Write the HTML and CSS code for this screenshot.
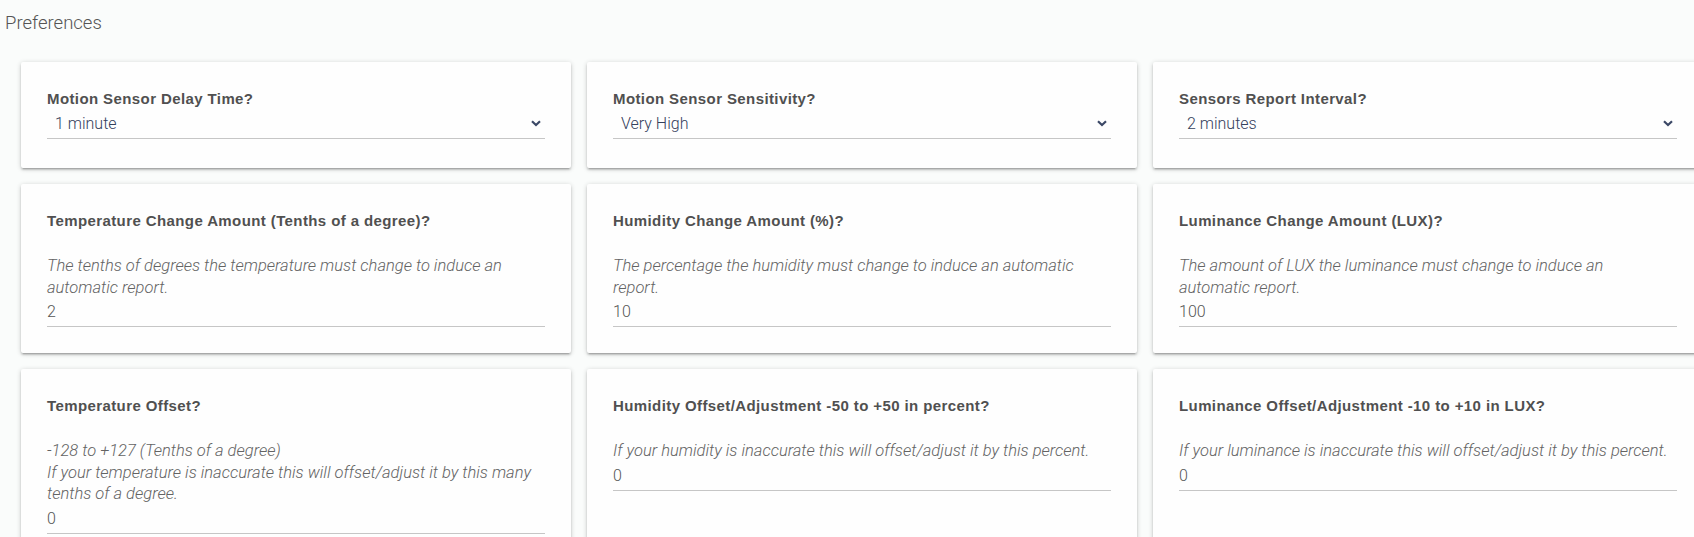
FILE: index.html
```html
<!DOCTYPE html>
<html>
<head>
<meta charset="utf-8">
<link rel="stylesheet" href="styles.css">
</head>
<body>
<div class="page-title">Preferences</div>
<div class="grid">
  <div class="card">
    <div class="label">Motion Sensor Delay Time?</div>
    <div class="select"><span class="select-value">1 minute</span><svg class="chev" width="10" height="7" viewBox="0 0 10 7"><polyline points="1,1.2 5,5 9,1.2" fill="none" stroke="#3b4866" stroke-width="2.2"/></svg></div>
  </div>
  <div class="card">
    <div class="label">Motion Sensor Sensitivity?</div>
    <div class="select"><span class="select-value">Very High</span><svg class="chev" width="10" height="7" viewBox="0 0 10 7"><polyline points="1,1.2 5,5 9,1.2" fill="none" stroke="#3b4866" stroke-width="2.2"/></svg></div>
  </div>
  <div class="card">
    <div class="label">Sensors Report Interval?</div>
    <div class="select"><span class="select-value">2 minutes</span><svg class="chev" width="10" height="7" viewBox="0 0 10 7"><polyline points="1,1.2 5,5 9,1.2" fill="none" stroke="#3b4866" stroke-width="2.2"/></svg></div>
  </div>

  <div class="card">
    <div class="label">Temperature Change Amount (Tenths of a degree)?</div>
    <div class="desc">The tenths of degrees the temperature must change to induce an automatic report.</div>
    <div class="input">2</div>
  </div>
  <div class="card">
    <div class="label">Humidity Change Amount (%)?</div>
    <div class="desc">The percentage the humidity must change to induce an automatic report.</div>
    <div class="input">10</div>
  </div>
  <div class="card">
    <div class="label">Luminance Change Amount (LUX)?</div>
    <div class="desc">The amount of LUX the luminance must change to induce an automatic report.</div>
    <div class="input">100</div>
  </div>

  <div class="card">
    <div class="label">Temperature Offset?</div>
    <div class="desc">-128 to +127 (Tenths of a degree)<br>If your temperature is inaccurate this will offset/adjust it by this many tenths of a degree.</div>
    <div class="input">0</div>
  </div>
  <div class="card">
    <div class="label">Humidity Offset/Adjustment -50 to +50 in percent?</div>
    <div class="desc">If your humidity is inaccurate this will offset/adjust it by this percent.</div>
    <div class="input">0</div>
  </div>
  <div class="card">
    <div class="label">Luminance Offset/Adjustment -10 to +10 in LUX?</div>
    <div class="desc">If your luminance is inaccurate this will offset/adjust it by this percent.</div>
    <div class="input">0</div>
  </div>
</div>
</body>
</html>
```

FILE: styles.css
```css
html, body {
  margin: 0;
  padding: 0;
  overflow: hidden;
  background: #fafcfb;
}
body {
  font-family: Roboto, "Liberation Sans", Arial, sans-serif;
  color: #444;
  width: 1694px;
  height: 537px;
}
.page-title {
  font-family: Roboto, sans-serif;
  font-weight: 300;
  font-size: 18.5px;
  line-height: 24px;
  color: #555;
  padding: 11px 5px 0;
}
.grid {
  display: grid;
  grid-template-columns: repeat(3, 550px);
  column-gap: 16px;
  row-gap: 16px;
  margin-top: 27px;
  padding-left: 21px;
}
.card {
  background: #fefefe;
  border-radius: 2px;
  padding: 26px;
  box-shadow: 0 2px 2px 0 rgba(0,0,0,.14), 0 3px 1px -2px rgba(0,0,0,.12), 0 1px 5px 0 rgba(0,0,0,.2);
}
.label {
  font-family: "Liberation Sans", Arial, sans-serif;
  font-weight: bold;
  font-size: 15px;
  letter-spacing: 0.4px;
  line-height: 22px;
  color: #505050;
}
.select {
  display: flex;
  align-items: center;
  height: 28px;
  padding: 0 4px 0 8px;
  border-bottom: 1px solid #c6c6c6;
  margin-bottom: 3px;
}
.select-value {
  flex: 1;
  font-family: Roboto, sans-serif;
  font-weight: 300;
  font-size: 16px;
  line-height: 28px;
  color: #34405c;
}
.chev {
  display: block;
  margin-top: -2px;
}
.desc {
  margin-top: 23px;
  font-family: Roboto, sans-serif;
  font-weight: 300;
  font-style: italic;
  font-size: 16.5px;
  line-height: 21.5px;
  color: #636363;
}
.input {
  height: 28px;
  line-height: 28px;
  font-family: Roboto, sans-serif;
  font-weight: 300;
  font-size: 16px;
  color: #555;
  border-bottom: 1px solid #c6c6c6;
}
```
